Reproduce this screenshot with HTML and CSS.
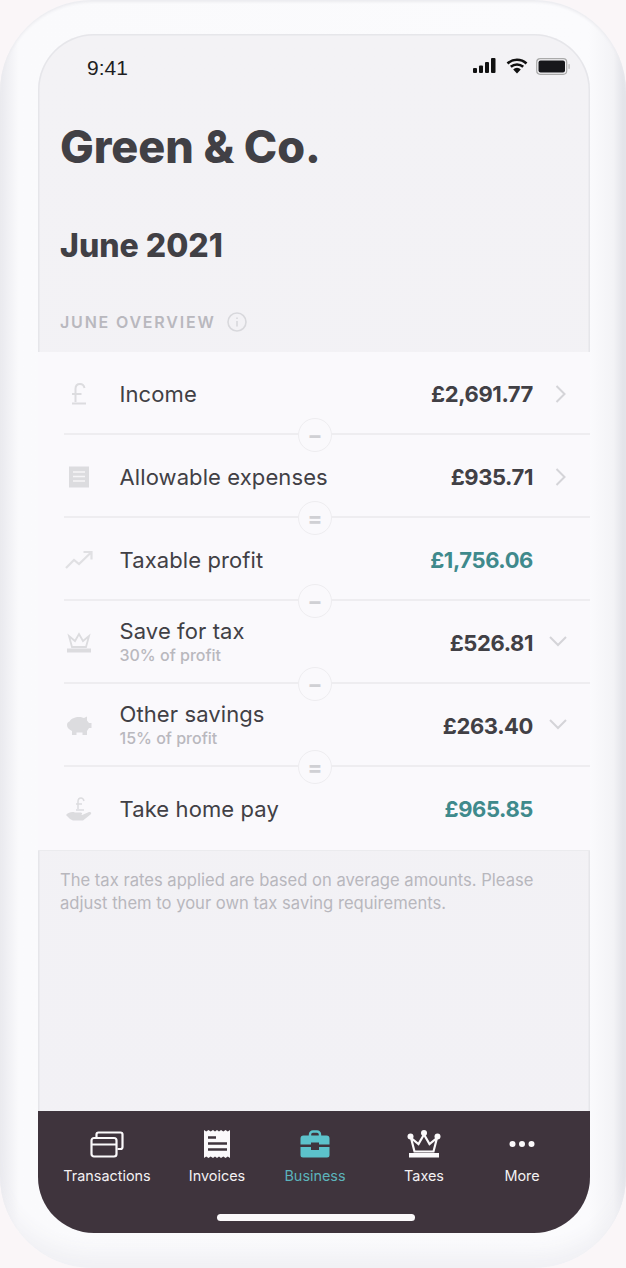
FILE: index.html
```html
<!DOCTYPE html>
<html lang="en">
<head>
<meta charset="utf-8">
<title>Green &amp; Co.</title>
<link rel="stylesheet" href="styles.css">
</head>
<body>
<div class="phone">
  <div class="screen">
    <div class="status">
      <span class="time">9:41</span>
      <div class="status-icons">
        <svg width="26" height="16" viewBox="0 0 26 16"><rect x="1" y="10" width="4" height="5" rx="1"/><rect x="7" y="7.5" width="4" height="7.5" rx="1"/><rect x="13" y="4" width="4" height="11" rx="1"/><rect x="19" y="0" width="4.5" height="15" rx="1"/></svg>
        <svg width="22" height="18" viewBox="0 0 22 17"><path d="M1.5 6a14 14 0 0 1 19 0M4.8 9.3a9.4 9.4 0 0 1 12.4 0" fill="none" stroke="#111" stroke-width="2.6"/><path d="M7.2 12a5 5 0 0 1 7.600 0L11 16z"/></svg>
        <svg width="34" height="17" viewBox="0 0 34 17"><rect x="0.7" y="0.7" width="30" height="15.6" rx="3.5" fill="none" stroke="#aaa" stroke-width="1.2"/><rect x="2.5" y="2.5" width="26.5" height="12" rx="2" fill="#17171b"/><rect x="32.4" y="6" width="1.4" height="5" rx="0.7" fill="#bbb"/></svg>
      </div>
    </div>
    <h1 class="company">Green &amp; Co.</h1>
    <h2 class="month">June 2021</h2>
    <div class="section-label">
      <span>JUNE OVERVIEW</span>
      <svg width="20" height="20" viewBox="0 0 20 20"><circle cx="10" cy="10" r="9" fill="none" stroke="#d8d8dc" stroke-width="1.6"/><path d="M10 9v5.5M10 5.5v1.6" stroke="#d8d8dc" stroke-width="1.6" fill="none"/></svg>
    </div>
    <div class="list">
      <div class="row">
        <span class="ico"><svg width="16" height="22" viewBox="0 0 16 22"><path d="M13.500 5C13 2.500 11.500 1 9 1 6.300 1 4.500 3 4.500 5.800V19M1 11h9.500M1 20.500h14" fill="none" stroke="#dcdcdf" stroke-width="2"/></svg></span>
        <div class="label"><span class="name">Income</span></div>
        <span class="amount">£2,691.77</span>
        <span class="act"><svg width="14" height="20" viewBox="0 0 14 20"><path d="M2.5 2l8 8-8 8" fill="none" stroke="#d4d4d8" stroke-width="2"/></svg></span>
        <span class="op">−</span>
      </div>
      <div class="row">
        <span class="ico"><svg width="22" height="24" viewBox="0 0 22 24"><rect x="1" y="1.500" width="20" height="21" fill="#dcdcdf"/><path d="M5 7h12M5 11.500h12M5 16h12" stroke="#f6f5f8" stroke-width="1.600"/></svg></span>
        <div class="label"><span class="name">Allowable expenses</span></div>
        <span class="amount">£935.71</span>
        <span class="act"><svg width="14" height="20" viewBox="0 0 14 20"><path d="M2.5 2l8 8-8 8" fill="none" stroke="#d4d4d8" stroke-width="2"/></svg></span>
        <span class="op">=</span>
      </div>
      <div class="row">
        <span class="ico"><svg width="28" height="20" viewBox="0 0 28 20"><path d="M1 18l8-8 5 4L25.500 3M18.500 2H26.500V9.500" fill="none" stroke="#e0e0e3" stroke-width="2.200"/></svg></span>
        <div class="label"><span class="name">Taxable profit</span></div>
        <span class="amount green">£1,756.06</span>
        <span class="act"></span>
        <span class="op">−</span>
      </div>
      <div class="row">
        <span class="ico"><svg width="26" height="22" viewBox="0 0 26 22"><path d="M3 4l3 11h14l3-11-6 5-4-7-4 7z" fill="none" stroke="#dcdcdf" stroke-width="1.800"/><rect x="1" y="16.500" width="24" height="4" fill="#dcdcdf"/></svg></span>
        <div class="label"><span class="name">Save for tax</span><span class="sub">30% of profit</span></div>
        <span class="amount">£526.81</span>
        <span class="act down"><svg width="20" height="14" viewBox="0 0 20 14"><path d="M2 3l8 8 8-8" fill="none" stroke="#d4d4d8" stroke-width="2"/></svg></span>
        <span class="op">−</span>
      </div>
      <div class="row">
        <span class="ico"><svg width="26" height="20" viewBox="0 0 26 20"><path d="M1 9c0-2 1-3 2.500-3.500C5 2.500 9 1 13 1c2 0 3.500.5 5 1l3-1.500v4l2 2.500H25.500v5H23l-2 3v4h-4.500v-2.500h-6V19H6v-4C3 13.500 1 12 1 9z" fill="#dcdcdf"/></svg></span>
        <div class="label"><span class="name">Other savings</span><span class="sub">15% of profit</span></div>
        <span class="amount">£263.40</span>
        <span class="act down"><svg width="20" height="14" viewBox="0 0 20 14"><path d="M2 3l8 8 8-8" fill="none" stroke="#d4d4d8" stroke-width="2"/></svg></span>
        <span class="op">=</span>
      </div>
      <div class="row">
        <span class="ico"><svg width="28" height="26" viewBox="0 0 28 26"><path d="M19 5c-.5-2-1.500-3-3-3-2 0-3 1.500-3 3.500V13M11 8h6M11 14h8" fill="none" stroke="#dcdcdf" stroke-width="1.500"/><path d="M1 19c3-3 6-3.500 9-2.500h6c1.500 0 1.500 2.500 0 2.500h-3 4l7-3c2-.5 3 1 1.500 2.500L18 24.500H8L5 23z" fill="#dcdcdf"/></svg></span>
        <div class="label"><span class="name">Take home pay</span></div>
        <span class="amount green">£965.85</span>
        <span class="act"></span>
      </div>
    </div>
    <p class="note">The tax rates applied are based on average amounts. Please adjust them to your own tax saving requirements.</p>
    <nav class="tabbar">
      <div class="tabs">
        <div class="tab">
          <svg width="34" height="28" viewBox="0 0 34 28"><g fill="none" stroke="#fbf9fb" stroke-width="2.200"><rect x="1.500" y="8" width="25" height="18.500" rx="2.500"/><path d="M1.500 14.500h25"/><path d="M6.500 7V4.500a2 2 0 0 1 2-2h22a2 2 0 0 1 2 2V17a2 2 0 0 1-2 2h-3"/></g></svg>
          <span>Transactions</span>
        </div>
        <div class="tab">
          <svg width="28" height="30" viewBox="0 0 28 30"><path d="M1 1l2.200 1.500L5.500 1l2.200 1.500L10 1l2 1.500L14 1l2 1.500L18 1l2.300 1.500L22.500 1l2.300 1.500L27 1v28l-2.200-1.500L22.500 29l-2.200-1.500L18 29l-2-1.500-2 1.500-2-1.500-2 1.500-2.300-1.500L5.500 29l-2.300-1.500L1 29z" fill="#fbf9fb"/><path d="M5 8.500h8M5 14.500h19M5 20.500h19" stroke="#3f343d" stroke-width="2.400"/></svg>
          <span>Invoices</span>
        </div>
        <div class="tab active">
          <svg width="30" height="28" viewBox="0 0 30 28"><path d="M10 6V4.500a3 3 0 0 1 3-3h4a3 3 0 0 1 3 3V6" fill="none" stroke="#5cc2cb" stroke-width="2.400"/><path d="M0.500 8.500a3 3 0 0 1 3-3h23a3 3 0 0 1 3 3v6H19v-2h-8v2H0.500zM0.500 17H11v3h8v-3h10.500v8a2.500 2.500 0 0 1-2.500 2.500H3A2.500 2.500 0 0 1 .5 25z" fill="#5cc2cb"/></svg>
          <span>Business</span>
        </div>
        <div class="tab">
          <svg width="34" height="28" viewBox="0 0 34 28"><g fill="#fbf9fb"><circle cx="3.500" cy="6.500" r="3"/><circle cx="17" cy="3" r="3"/><circle cx="30.500" cy="6.500" r="3"/><rect x="2" y="23" width="30" height="4.500"/></g><path d="M4 8l3.500 13.500h19L30 8l-7.500 6L17 4.500 11.500 14z" fill="none" stroke="#fbf9fb" stroke-width="2.200"/></svg>
          <span>Taxes</span>
        </div>
        <div class="tab">
          <svg width="26" height="28" viewBox="0 0 26 28"><g fill="#fbf9fb"><circle cx="3.500" cy="14" r="3"/><circle cx="13" cy="14" r="3"/><circle cx="22.500" cy="14" r="3"/></g></svg>
          <span>More</span>
        </div>
      </div>
      <div class="home"></div>
    </nav>
  </div>
</div>
</body>
</html>
```

FILE: styles.css
```css
* { box-sizing: border-box; }
html, body { margin: 0; padding: 0; }
body {
  width: 626px;
  height: 1268px;
  overflow: hidden;
  background: #faf6f8;
  font-family: Inter, "Liberation Sans", sans-serif;
}
.phone {
  width: 626px;
  height: 1268px;
  padding: 34px 36px 35px 38px;
  border-radius: 92px;
  background: linear-gradient(90deg, #e9e9ee 0, #fafafc 3%, #fbfbfd 94%, #f3f3f6 98%, #dfe0e6 100%);
  box-shadow: inset 0 2px 3px #ebebef, inset 0 -28px 20px -14px #f0f0f4;
}
.screen {
  position: relative;
  height: 100%;
  display: flex;
  flex-direction: column;
  overflow: hidden;
  border-radius: 56px;
  background: linear-gradient(180deg, #f3f2f5 0, #f2f1f5 100%);
  box-shadow: inset 0 0 0 1.5px #e6e6ea;
}
.status {
  height: 48px;
  padding: 20px 20px 0 49px;
  display: flex;
  justify-content: space-between;
  align-items: flex-start;
  flex: none;
}
.time {
  font-family: "Liberation Sans", Arial, sans-serif;
  font-size: 21px;
  line-height: 28px;
  color: #1e1e22;
}
.status-icons {
  display: flex;
  align-items: center;
  gap: 8px;
  padding-top: 3px;
}
.status-icons svg { fill: #111; }
.company {
  margin: 38px 0 0 22px;
  font-size: 45px;
  line-height: 54px;
  font-weight: 800;
  letter-spacing: -0.1px;
  color: #414045;
  flex: none;
}
.month {
  margin: 52px 0 0 22px;
  font-size: 32px;
  line-height: 40px;
  font-weight: 800;
  color: #414045;
  flex: none;
}
.section-label {
  margin: 45px 0 0 22px;
  height: 22px;
  display: flex;
  align-items: center;
  gap: 11px;
  font-size: 16px;
  font-weight: 600;
  letter-spacing: 1.8px;
  color: #b9b8be;
  flex: none;
}
.list {
  margin-top: 19px;
  height: 499px;
  flex: none;
  background: #faf9fc;
  border-bottom: 1px solid #ebebee;
  padding-left: 26px;
}
.row {
  position: relative;
  height: 83px;
  padding-top: 2px;
  display: flex;
  align-items: center;
  border-bottom: 2px solid #eeedf0;
}
.row:last-child {
  padding-top: 0;
  border-bottom: 0;
}
.ico {
  width: 55.5px;
  padding-right: 25.5px;
  flex: none;
  display: flex;
  justify-content: center;
}
.label {
  flex: 1;
  padding-top: 2px;
  display: flex;
  flex-direction: column;
}
.name {
  font-size: 22px;
  line-height: 27px;
  letter-spacing: 0.1px;
  color: #414045;
}
.sub {
  margin-bottom: 4px;
  font-size: 16px;
  line-height: 21px;
  color: #b9b8be;
  font-weight: 500;
}
.amount {
  font-size: 22px;
  font-weight: 700;
  color: #414045;
  letter-spacing: -0.4px;
}
.amount.green { color: #3f8a8c; }
.act {
  width: 57px;
  flex: none;
  display: flex;
  justify-content: flex-start;
  padding-left: 21px;
}
.act.down {
  padding-left: 15px;
  margin-top: -4px;
}
.op {
  position: absolute;
  left: 234px;
  bottom: -19px;
  width: 34px;
  height: 34px;
  border-radius: 50%;
  background: #faf9fc;
  border: 1.5px solid #eeedf0;
  display: flex;
  align-items: center;
  justify-content: center;
  font-size: 22px;
  font-weight: 700;
  line-height: 1;
  color: #d0d0d4;
  z-index: 1;
}
.note {
  margin: 18px 30px 0 22px;
  font-size: 16.6px;
  line-height: 23px;
  color: #b8b7bd;
  flex: none;
}
.tabbar {
  margin-top: auto;
  height: 122px;
  flex: none;
  background: #3f343d;
  display: flex;
  flex-direction: column;
  align-items: center;
}
.tabs {
  width: 100%;
  height: 103px;
  display: grid;
  grid-template-columns: 138px 82px 114px 104px 92px;
}
.tab {
  padding-top: 18px;
  display: flex;
  flex-direction: column;
  align-items: center;
  gap: 7px;
  font-size: 14.4px;
  line-height: 20px;
  color: #f3f1f3;
}
.tab svg { display: block; height: 30px; }
.tab.active { color: #5cb3bb; }
.home {
  width: 198px;
  height: 7px;
  margin-left: 4px;
  border-radius: 4px;
  background: #fbf9fb;
}
```
